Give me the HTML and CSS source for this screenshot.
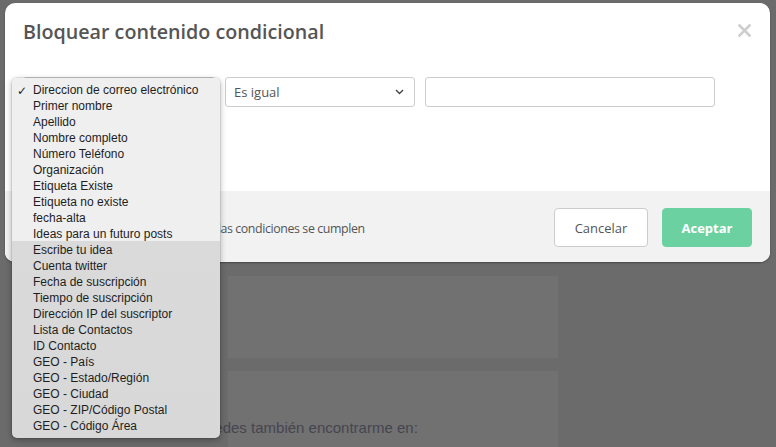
FILE: index.html
```html
<!DOCTYPE html>
<html lang="es">
<head>
<meta charset="utf-8">
<title>Bloquear contenido condicional</title>
<link rel="stylesheet" href="styles.css">
</head>
<body>
<div class="page">
  <div class="card card-one"></div>
  <div class="card card-two">
    <p class="page-text">Puedes también encontrarme en:</p>
  </div>
</div>

<div class="modal">
  <div class="modal-header">
    <h1 class="modal-title">Bloquear contenido condicional</h1>
    <svg class="modal-close" width="13" height="13" viewBox="0 0 13 13"><path d="M1.5 1.5 L11.5 11.5 M11.5 1.5 L1.5 11.5" stroke="#cdcdcd" stroke-width="2.6" stroke-linecap="square"/></svg>
  </div>
  <div class="modal-body">
    <div class="cond-row">
      <div class="select select-field">Direccion de correo electrónico</div>
      <div class="select select-op">Es igual
        <svg class="chev" width="9" height="6" viewBox="0 0 9 6"><path d="M1 1 L4.5 4.5 L8 1" fill="none" stroke="#444" stroke-width="1.4"/></svg>
      </div>
      <div class="text-input"></div>
    </div>
  </div>
  <div class="modal-footer">
    <span class="footer-text">Bloquear contenido si todas las condiciones se cumplen</span>
    <div class="footer-buttons">
      <button class="btn btn-cancel">Cancelar</button>
      <button class="btn btn-ok">Aceptar</button>
    </div>
  </div>
</div>

<div class="menu">
  <ul class="menu-list">
    <li class="menu-item checked"><span class="check">&#x2713;</span>Direccion de correo electrónico</li>
    <li class="menu-item">Primer nombre</li>
    <li class="menu-item">Apellido</li>
    <li class="menu-item">Nombre completo</li>
    <li class="menu-item">Número Teléfono</li>
    <li class="menu-item">Organización</li>
    <li class="menu-item">Etiqueta Existe</li>
    <li class="menu-item">Etiqueta no existe</li>
    <li class="menu-item">fecha-alta</li>
    <li class="menu-item">Ideas para un futuro posts</li>
    <li class="menu-item">Escribe tu idea</li>
    <li class="menu-item">Cuenta twitter</li>
    <li class="menu-item">Fecha de suscripción</li>
    <li class="menu-item">Tiempo de suscripción</li>
    <li class="menu-item">Dirección IP del suscriptor</li>
    <li class="menu-item">Lista de Contactos</li>
    <li class="menu-item">ID Contacto</li>
    <li class="menu-item">GEO - País</li>
    <li class="menu-item">GEO - Estado/Región</li>
    <li class="menu-item">GEO - Ciudad</li>
    <li class="menu-item">GEO - ZIP/Código Postal</li>
    <li class="menu-item">GEO - Código Área</li>
  </ul>
</div>
</body>
</html>
```
FILE: styles.css
```css
html, body {
  margin: 0;
  padding: 0;
}
body {
  width: 776px;
  height: 447px;
  overflow: hidden;
  background: #6b6b6b;
  font-family: "Open Sans", "Liberation Sans", sans-serif;
  position: relative;
}

/* page behind the overlay */
.page {
  padding-top: 276px;
  display: flex;
  flex-direction: column;
  gap: 13px;
}
.card {
  margin-left: 228px;
  width: 330px;
  background: #717171;
}
.card-one {
  height: 82px;
}
.card-two {
  height: 80px;
  position: relative;
}
.page-text {
  margin: 0;
  padding-top: 48px;
  margin-left: -32px;
  font-family: "Liberation Sans", Arial, sans-serif;
  font-size: 15px;
  color: #45454f;
  white-space: nowrap;
}

/* modal */
.modal {
  position: absolute;
  left: 5px;
  top: 3px;
  width: 765px;
  height: 259px;
  background: #fff;
  border-radius: 10px;
  overflow: hidden;
  display: flex;
  flex-direction: column;
  box-shadow: 0 1px 2px rgba(0,0,0,0.35);
}
.modal-header {
  display: flex;
  justify-content: space-between;
  align-items: flex-start;
  padding: 15px 19px 0 18px;
  height: 56px;
  box-sizing: border-box;
}
.modal-title {
  margin: 0;
  font-size: 19.7px;
  font-weight: 600;
  line-height: 28px;
  color: #555;
}
.modal-close {
  margin-top: 6px;
}
.modal-body {
  flex: 1;
  padding: 18px 18px 0 18px;
}
.cond-row {
  display: flex;
  gap: 10px;
}
.select, .text-input {
  height: 30px;
  box-sizing: border-box;
  border: 1px solid #ccc;
  border-radius: 3px;
  background: #fff;
  font-size: 13px;
  color: #555;
  display: flex;
  align-items: center;
  padding: 0 9px 0 8px;
}
.select-field {
  width: 192px;
}
.select-op {
  width: 190px;
  justify-content: space-between;
}
.chev {
  margin-right: 1px;
}
.text-input {
  width: 290px;
}
.modal-footer {
  height: 71px;
  background: #f2f2f2;
  display: flex;
  align-items: center;
  justify-content: space-between;
  padding: 0 18px 0 59px;
}
.footer-text {
  font-size: 12.4px;
  letter-spacing: -0.4px;
  color: #555;
  margin-top: 4px;
}
.footer-buttons {
  display: flex;
  gap: 14px;
  margin-top: 2px;
}
.btn {
  height: 39px;
  border-radius: 4px;
  font-family: "Open Sans", sans-serif;
  font-size: 13px;
  padding: 0;
}
.btn-cancel {
  width: 94px;
  background: #fff;
  border: 1px solid #ccc;
  color: #555;
}
.btn-ok {
  width: 90px;
  background: #6bd1a1;
  border: 1px solid #6bd1a1;
  color: #fff;
  font-weight: 700;
}

/* native dropdown menu */
.menu {
  position: absolute;
  left: 12px;
  top: 78px;
  width: 208px;
  height: 360px;
  border-radius: 5px;
  background: linear-gradient(#efefef 0, #efefef 163px, #dadada 163px, #d8d8d8 100%);
  box-shadow: 0 2px 6px rgba(0,0,0,0.3), 0 0 0 1px rgba(0,0,0,0.08);
  box-sizing: border-box;
  padding-top: 4px;
}
.menu-list {
  list-style: none;
  margin: 0;
  padding: 0;
}
.menu-item {
  position: relative;
  height: 16px;
  line-height: 16px;
  padding-left: 21px;
  font-family: "Liberation Sans", Arial, sans-serif;
  font-size: 12px;
  color: #1e1e1e;
  white-space: nowrap;
}
.check {
  position: absolute;
  left: 5px;
  top: 1px;
  font-family: "DejaVu Sans", sans-serif;
  font-size: 12px;
  font-weight: bold;
}
```
